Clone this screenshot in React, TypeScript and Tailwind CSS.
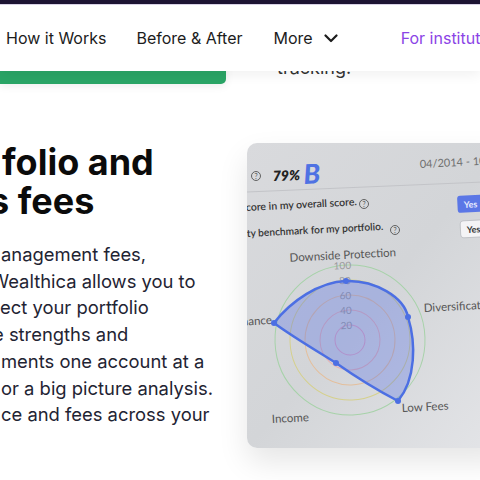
const Help = ({ x, y }: { x: number; y: number }) => (
  <g>
    <circle cx={x} cy={y} r={4.5} fill="none" stroke="#555" strokeWidth={0.9} />
    <text x={x} y={y + 3} fontSize={7} textAnchor="middle" fill="#555" fontFamily="Lato, sans-serif">
      ?
    </text>
  </g>
);

const RadarCard = () => (
  <div className="h-[305px] w-[260px] shrink-0 overflow-hidden rounded-[10px] bg-gradient-to-br from-[#d9dadd] via-[#d3d5d8] to-[#e4e5e8] shadow-[0_14px_30px_rgba(0,0,0,0.10)]">
    <svg width={260} height={305} viewBox="0 0 260 305" className="block">
      <g fontFamily="Lato, 'Open Sans', sans-serif">
        <text x={-3} y={37} fontSize={12} fill="#444">:</text>
        <Help x={9} y={33} />
        <text x={26} y={38} fontSize={14} fontWeight={800} fontStyle="italic" fill="#222" transform="rotate(-2 26 38)">
          79%
        </text>
        <text x={57} y={41} fontSize={27} fontWeight={900} fontStyle="italic" fill="#4f72e3" transform="rotate(-3 57 41)">
          B
        </text>
        <text x={173} y={25} fontSize={11} fill="#6f6f6f" transform="rotate(-3 173 25)">
          04/2014 - 10/2019
        </text>
        <line x1={0} y1={49} x2={260} y2={38} stroke="#c3c4c8" strokeWidth={1} />

        <text x={-1} y={68} fontSize={10.5} fontWeight={600} fill="#333" transform="rotate(-3 0 68)">
          core in my overall score.
        </text>
        <Help x={117} y={61} />
        <rect x={210} y={53} width={34} height={17} rx={3} fill="#5b77e6" transform="rotate(-3 210 53)" />
        <text x={217} y={65} fontSize={9} fontWeight={700} fill="#e8ecff" transform="rotate(-3 217 65)">
          Yes
        </text>

        <text x={0} y={94} fontSize={10.2} fontWeight={600} fill="#333" transform="rotate(-3 0 94)">
          ty benchmark for my portfolio.
        </text>
        <Help x={148} y={87} />
        <rect x={213} y={78} width={34} height={17} rx={3} fill="#f4f4f6" stroke="#b9bbc0" strokeWidth={0.8} transform="rotate(-3 213 78)" />
        <text x={220} y={90} fontSize={9} fontWeight={700} fill="#333" transform="rotate(-3 220 90)">
          Yes
        </text>

        <g transform="rotate(-2 103 197)">
          <circle cx={103} cy={197} r={75} fill="none" stroke="#a7d2a9" strokeWidth={1} />
          <circle cx={103} cy={197} r={60} fill="none" stroke="#d5d08c" strokeWidth={1} />
          <circle cx={103} cy={197} r={45} fill="none" stroke="#e4bf9c" strokeWidth={1} />
          <circle cx={103} cy={197} r={30} fill="none" stroke="#e4b0b3" strokeWidth={1} />
          <circle cx={103} cy={197} r={15} fill="none" stroke="#dfa3bd" strokeWidth={1} />
          <g fontSize={10} fill="#9b9b9d" textAnchor="middle">
            <text x={98} y={126}>100</text>
            <text x={100} y={141}>80</text>
            <text x={100} y={156}>60</text>
            <text x={100} y={171}>40</text>
            <text x={100} y={186}>20</text>
          </g>
        </g>

        <path
          d="M99 138 C128 137 157 154 161 174 C169 200 169 236 151 258 C128 246 106 232 89 220 C70 208 46 194 27 180 C44 158 72 139 99 138 Z"
          fill="rgba(82,110,232,0.33)"
          stroke="#4c6fe3"
          strokeWidth={2.5}
          strokeLinejoin="round"
        />
        <g fill="#4c6fe3">
          <circle cx={99} cy={138} r={3} />
          <circle cx={161} cy={174} r={3} />
          <circle cx={151} cy={258} r={3} />
          <circle cx={89} cy={220} r={3} />
          <circle cx={27} cy={180} r={3} />
        </g>

        <g fontSize={11.5} fill="#555">
          <text x={96} y={116} textAnchor="middle" transform="rotate(-3 96 116)">
            Downside Protection
          </text>
          <text x={177} y={169} transform="rotate(-3 177 169)">
            Diversification
          </text>
          <text x={25} y={181} textAnchor="end" transform="rotate(-3 25 181)">
            Performance
          </text>
          <text x={155} y={269} transform="rotate(-3 155 269)">
            Low Fees
          </text>
          <text x={25} y={280} transform="rotate(-3 25 280)">
            Income
          </text>
        </g>
      </g>
    </svg>
  </div>
);

export default function App() {
  return (
    <div className="relative h-[480px] w-[480px] overflow-hidden bg-white font-['Inter',sans-serif]">
      <header className="absolute inset-x-0 top-0 z-10 bg-white shadow-[0_4px_12px_rgba(0,0,0,0.06)]">
        <div className="h-[4px] bg-[#1d1433]" />
        <div className="h-px bg-[#d8d2e6]" />
        <nav className="flex h-[66px] items-center whitespace-nowrap pl-[6px] text-[16px] text-[#1c1c1c]">
          <a>How it Works</a>
          <a className="ml-[30px]">Before &amp; After</a>
          <a className="ml-[31px] flex items-center">
            More
            <svg width={14} height={9} viewBox="0 0 14 9" className="ml-[11px]" fill="none" stroke="#1c1c1c" strokeWidth={2.2} strokeLinecap="round" strokeLinejoin="round">
              <polyline points="1.5,1.5 7,7 12.5,1.5" />
            </svg>
          </a>
          <span className="ml-[47px] h-[20px] w-[2px] bg-[#1c1c1c]" />
          <a className="ml-[16px] text-[#8b44e6]">For institutions</a>
        </nav>
      </header>

      <div className="flex">
        <div className="mt-[34px] h-[50px] w-[226px] shrink-0 rounded-br-[5px] bg-[#2aa566] shadow-[0_2px_8px_rgba(0,0,0,0.08)]" />
        <p className="ml-[51px] mt-[54px] whitespace-nowrap text-[18px] leading-[27px] text-[#333]">tracking.</p>
      </div>

      <div className="mt-[59px] flex">
        <div className="w-[247px] shrink-0 whitespace-nowrap">
          <h2 className="text-[36px] font-bold leading-[39px] text-[#0b0b0b]">
            <div className="ml-[2px]">folio and</div>
            <div className="ml-[-11px]">s fees</div>
          </h2>
          <div className="mt-[20px] text-[18.4px] leading-[26.7px] text-[#1f2433]">
            <div className="ml-[1px]">anagement fees,</div>
            <div className="ml-[-9px]">Wealthica allows you to</div>
            <div className="ml-[0px]">ect your portfolio</div>
            <div className="ml-[-7px]">e strengths and</div>
            <div className="ml-[1px]">ments one account at a</div>
            <div className="ml-[1px]">or a big picture analysis.</div>
            <div className="ml-[1px]">ce and fees across your</div>
          </div>
        </div>
        <RadarCard />
      </div>
    </div>
  );
}
